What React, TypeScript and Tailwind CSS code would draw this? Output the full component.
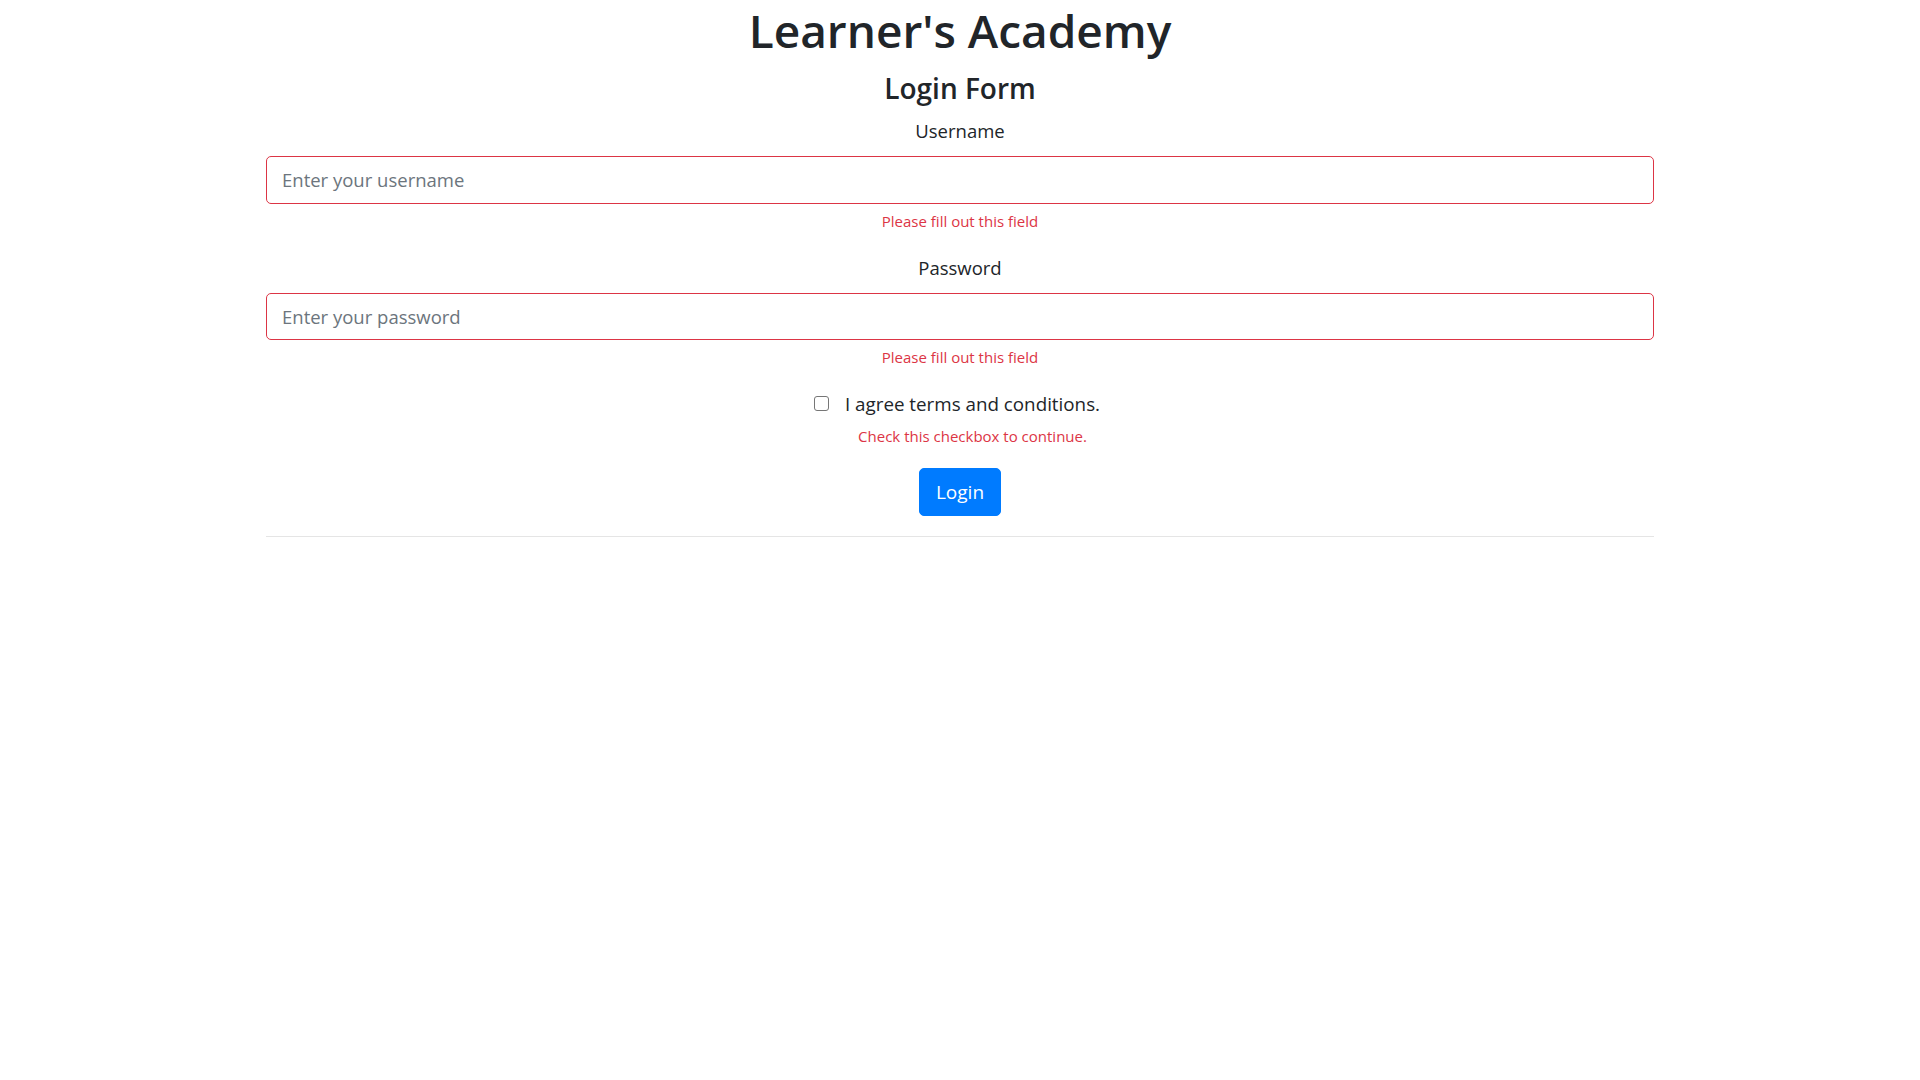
export default function App() {
  const font = { fontFamily: '"Open Sans", "Noto Sans", sans-serif' };
  return (
    <div className="min-h-screen bg-white text-[#212529]" style={font}>
      <div className="w-[1388px] mx-auto text-center">
        <h1 className="text-[46px] leading-[60px] font-semibold mb-[10px]">Learner's Academy</h1>
        <h4 className="text-[28px] leading-[36px] font-semibold mb-[10px]">Login Form</h4>

        <form onSubmit={(e) => e.preventDefault()}>
          <div className="mb-[20px]">
            <label className="block text-[18.5px] leading-[30px] mb-[10px]">Username</label>
            <input
              type="text"
              placeholder="Enter your username"
              className="block w-full h-[47.5px] px-[15px] text-[18.5px] border border-[#dc3545] rounded-[5px] outline-none placeholder:text-[#6c757d]"
            />
            <div className="mt-[5px] text-[15px] leading-[24px] text-[#dc3545]">Please fill out this field</div>
          </div>

          <div className="mb-[20px]">
            <label className="block text-[18.5px] leading-[30px] mb-[10px]">Password</label>
            <input
              type="password"
              placeholder="Enter your password"
              className="block w-full h-[47.5px] px-[15px] text-[18.5px] border border-[#dc3545] rounded-[5px] outline-none placeholder:text-[#6c757d]"
            />
            <div className="mt-[5px] text-[15px] leading-[24px] text-[#dc3545]">Please fill out this field</div>
          </div>

          <div className="mb-[20px] pl-[25px]">
            <label className="relative inline-block text-[18.8px] leading-[30px]">
              <input
                type="checkbox"
                className="absolute left-[-31px] top-[7px] w-[15px] h-[15px] appearance-none border border-[#767676] rounded-[3px] bg-white"
              />
              I agree terms and conditions.
            </label>
            <div className="mt-[5px] text-[15px] leading-[24px] text-[#dc3545]">Check this checkbox to continue.</div>
          </div>

          <button
            type="submit"
            className="w-[82px] h-[47.5px] text-[19px] text-white bg-[#007bff] border border-[#007bff] rounded-[5px]"
          >
            Login
          </button>
        </form>

        <hr className="mt-[20px] border-0 border-t border-black/10" />
      </div>
    </div>
  );
}
